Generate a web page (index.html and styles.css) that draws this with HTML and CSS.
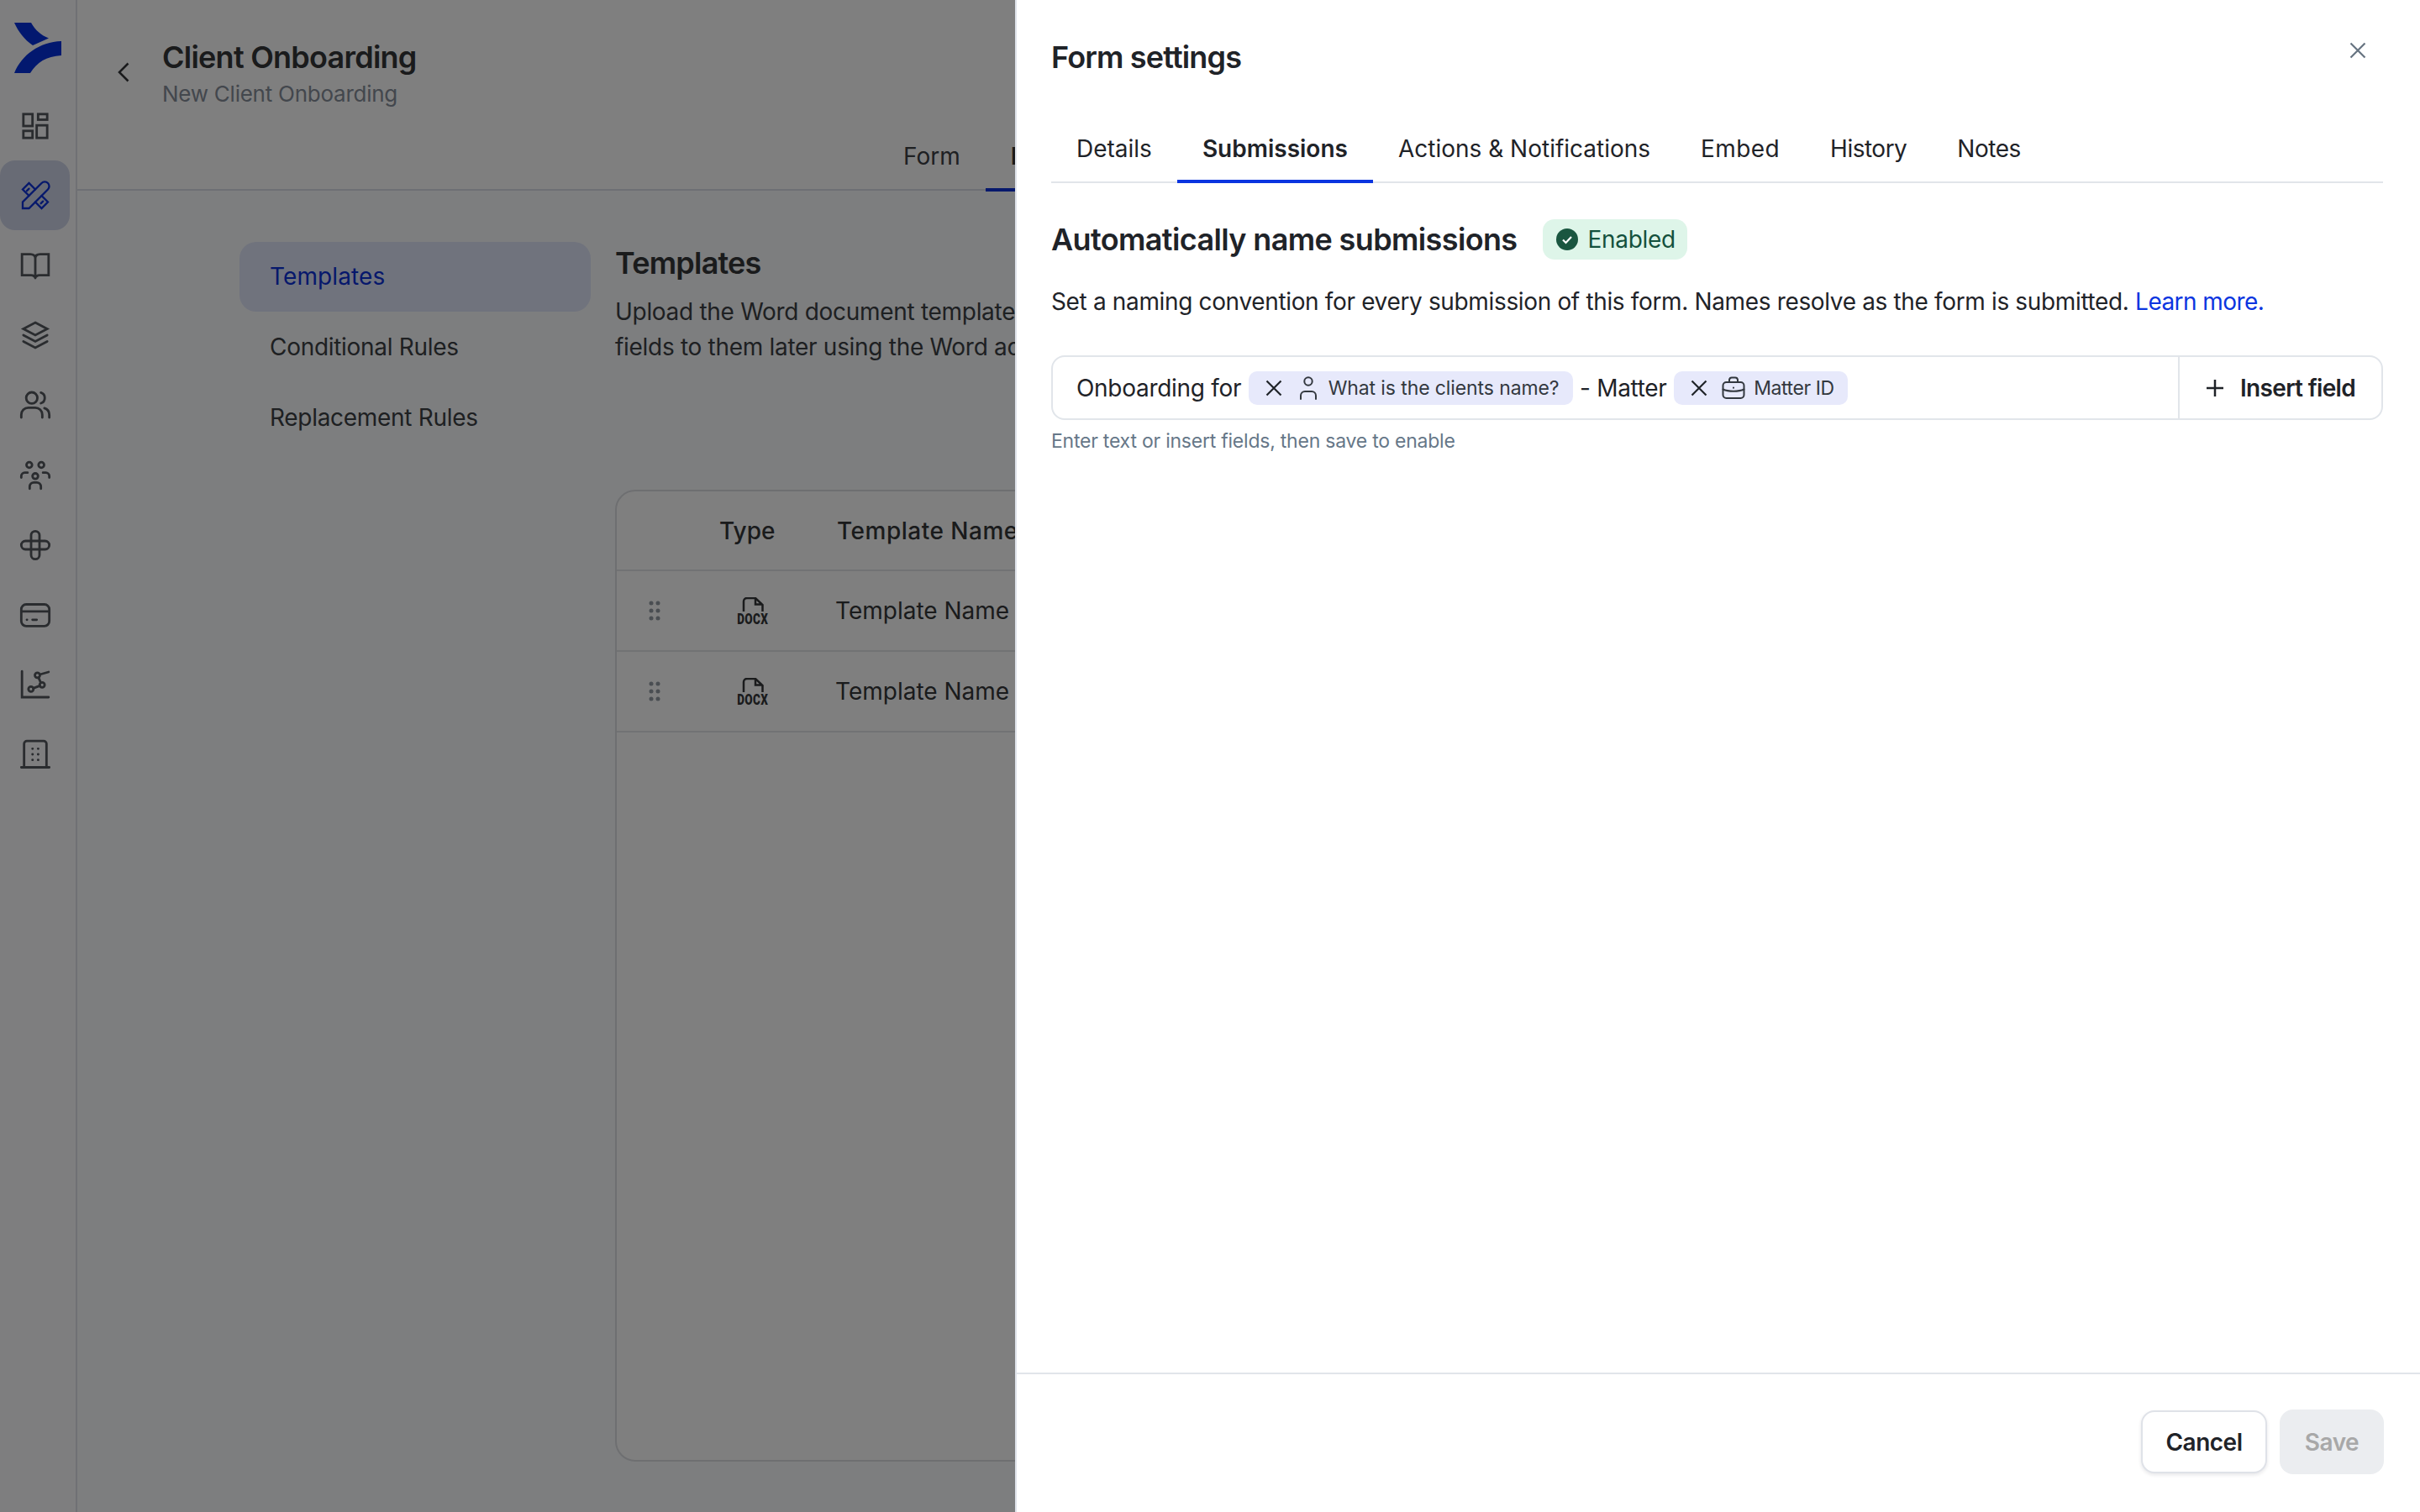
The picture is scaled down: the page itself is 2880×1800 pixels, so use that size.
FILE: index.html

```html
<!DOCTYPE html>
<html lang="en">
<head>
    <meta charset="UTF-8">
    <title>Client Onboarding</title>
    <link rel="stylesheet" href="styles.css">
</head>
<body>

<div class="app">
    <!-- Left icon rail -->
    <aside class="sidebar">
        <svg class="logo" width="56" height="60" viewBox="0 0 56 60">
            <path d="M0 0H20C25 9 32 15 41 18.500L22 27C12 20 5 11 0 0Z"/>
            <path d="M56 22V39C38 40 27 47 19 60H0C9 38 30 23 56 22Z"/>
        </svg>
        <nav class="nav">
            <a class="nav-item">
                <svg viewBox="0 0 24 24"><rect x="3.500" y="3.500" width="6.500" height="8.500"/><rect x="14" y="3.500" width="6.500" height="4"/><rect x="3.500" y="15.500" width="6.500" height="5"/><rect x="13" y="11.500" width="7.500" height="9"/></svg>
            </a>
            <a class="nav-item active">
                <svg viewBox="0 0 24 24"><path d="M3 21V16.500L16.500 3A3.180 3.180 0 0 1 21 7.500L7.500 21Z"/><path d="M7.500 12L3 7.500L7.500 3L12 7.500M12 16.500L16.500 21L21 16.500L16.500 12M6 8.500L7.500 7M16 17.500L17.500 16"/></svg>
            </a>
            <a class="nav-item">
                <svg viewBox="0 0 24 24"><path d="M12 7C12 5 10.500 4 8.500 4H2.500V19H9C10.500 19 12 20 12 21C12 20 13.500 19 15 19H21.500V4H15.500C13.500 4 12 5 12 7ZM12 7V21"/></svg>
            </a>
            <a class="nav-item">
                <svg viewBox="0 0 24 24"><path d="M12 3L20.500 7.500L12 12L3.500 7.500ZM3.500 12L12 16.500L20.500 12M3.500 16.500L12 21L20.500 16.500"/></svg>
            </a>
            <a class="nav-item">
                <svg viewBox="0 0 24 24"><circle cx="9.500" cy="7" r="4"/><path d="M16 3.200A4 4 0 0 1 16 10.800M2 21V19A5 5 0 0 1 7 14H12A5 5 0 0 1 17 19V21M18.500 14.300A5 5 0 0 1 22 19V21"/></svg>
            </a>
            <a class="nav-item">
                <svg viewBox="0 0 24 24"><circle cx="7.700" cy="4.500" r="2"/><circle cx="16.300" cy="4.500" r="2"/><circle cx="12" cy="12.500" r="2"/><path d="M2 13.500V12.500A2.500 2.500 0 0 1 4.500 10H6.500M22 13.500V12.500A2.500 2.500 0 0 0 19.500 10H17.500M8 21.500V20A3 3 0 0 1 11 17H13A3 3 0 0 1 16 20V21.500"/></svg>
            </a>
            <a class="nav-item">
                <svg viewBox="0 0 24 24"><path d="M14 9H5A3 3 0 0 0 5 15H8.500M10 15H19A3 3 0 0 0 19 9H15.500M9 14V5A3 3 0 0 1 15 5V8M15 10V19A3 3 0 0 1 9 19V16"/></svg>
            </a>
            <a class="nav-item">
                <svg viewBox="0 0 24 24"><rect x="2" y="4.500" width="20" height="15.500" rx="3.500"/><path d="M2 9.500H22M6 15.500H6.100M10 15.500H13"/></svg>
            </a>
            <a class="nav-item">
                <svg viewBox="0 0 24 24"><path d="M2.500 2.500V21H21.500M10.500 14.600L15.300 12.800M15.900 10.600L14.300 7M15.200 4.800L21.500 3"/><circle cx="8.900" cy="15.200" r="1.800"/><circle cx="16.900" cy="12.200" r="1.800"/><circle cx="13.500" cy="5.300" r="1.800"/></svg>
            </a>
            <a class="nav-item">
                <svg viewBox="0 0 24 24"><path d="M4 21V4.500A2 2 0 0 1 6 2.500H18A2 2 0 0 1 20 4.500V21M2 21.300H22"/><path d="M10 8H10.100M14 8H14.100M10 12H10.100M14 12H14.100M10 16H10.100M14 16H14.100"/></svg>
            </a>
        </nav>
    </aside>

    <main class="main">
        <header class="page-header">
            <div class="page-title-row">
                <svg class="back-icon" width="14" height="24" viewBox="0 0 14 24"><path d="M12.500 1.500L2 12L12.500 22.500"/></svg>
                <div>
                    <h1 class="page-title">Client Onboarding</h1>
                    <p class="page-subtitle">New Client Onboarding</p>
                </div>
            </div>
            <div class="page-tabs">
                <a class="page-tab">Form</a>
                <a class="page-tab active">Docs</a>
            </div>
        </header>

        <div class="page-body">
            <div class="side-menu">
                <a class="side-item active">Templates</a>
                <a class="side-item">Conditional Rules</a>
                <a class="side-item">Replacement Rules</a>
            </div>
            <section class="content">
                <h2 class="content-title">Templates</h2>
                <p class="content-text">Upload the Word document templates<br>fields to them later using the Word add-in</p>
                <div class="table-card">
                    <div class="table-row table-head">
                        <div></div>
                        <div>Type</div>
                        <div class="head-name">Template Name</div>
                    </div>
                    <div class="table-row">
                        <svg class="drag-icon" width="14" height="24" viewBox="0 0 14 24"><circle cx="3" cy="3" r="2.500"/><circle cx="11" cy="3" r="2.500"/><circle cx="3" cy="12" r="2.500"/><circle cx="11" cy="12" r="2.500"/><circle cx="3" cy="21" r="2.500"/><circle cx="11" cy="21" r="2.500"/></svg>
                        <div class="docx-icon">
                            <svg width="26" height="18" viewBox="0 0 26 18"><path d="M2 17V5A4 4 0 0 1 6 1H16L24.500 9V17M16 1V8.500H24.500"/></svg>
                            <span class="docx-label">DOCX</span>
                        </div>
                        <div>Template Name</div>
                    </div>
                    <div class="table-row">
                        <svg class="drag-icon" width="14" height="24" viewBox="0 0 14 24"><circle cx="3" cy="3" r="2.500"/><circle cx="11" cy="3" r="2.500"/><circle cx="3" cy="12" r="2.500"/><circle cx="11" cy="12" r="2.500"/><circle cx="3" cy="21" r="2.500"/><circle cx="11" cy="21" r="2.500"/></svg>
                        <div class="docx-icon">
                            <svg width="26" height="18" viewBox="0 0 26 18"><path d="M2 17V5A4 4 0 0 1 6 1H16L24.500 9V17M16 1V8.500H24.500"/></svg>
                            <span class="docx-label">DOCX</span>
                        </div>
                        <div>Template Name</div>
                    </div>
                </div>
            </section>
        </div>
    </main>
</div>

<div class="overlay"></div>

<!-- Form settings drawer -->
<div class="drawer">
    <svg class="drawer-close" width="20" height="20" viewBox="0 0 20 20"><path d="M1.500 1.500L18.500 18.500M18.500 1.500L1.500 18.500"/></svg>
    <div class="drawer-top">
        <h2 class="drawer-title">Form settings</h2>
        <div class="tabs">
            <a class="tab">Details</a>
            <a class="tab active">Submissions</a>
            <a class="tab">Actions &amp; Notifications</a>
            <a class="tab tab-loose">Embed</a>
            <a class="tab tab-tight">History</a>
            <a class="tab tab-tight">Notes</a>
        </div>
    </div>

    <div class="drawer-body">
        <div class="section-head">
            <h3 class="section-title">Automatically name submissions</h3>
            <span class="badge">
                <svg width="26" height="26" viewBox="0 0 26 26"><circle cx="13" cy="13" r="13"/><path d="M8 13.500L11.500 17L18 10"/></svg>
                Enabled
            </span>
        </div>
        <p class="section-text">Set a naming convention for every submission of this form. Names resolve as the form is submitted. <a class="link">Learn more.</a></p>

        <div class="name-input">
            <div class="name-parts">
                <span>Onboarding for</span>
                <span class="chip">
                    <svg class="chip-x" width="20" height="20" viewBox="0 0 20 20"><path d="M1.500 1.500L18.500 18.500M18.500 1.500L1.500 18.500"/></svg>
                    <svg class="chip-icon" width="28" height="28" viewBox="0 0 28 28"><circle cx="14" cy="6" r="4.700"/><path d="M5 27V23A5 5 0 0 1 10 18H18A5 5 0 0 1 23 23V27"/></svg>
                    <span class="chip-text">What is the clients name?</span>
                </span>
                <span>- Matter</span>
                <span class="chip">
                    <svg class="chip-x" width="20" height="20" viewBox="0 0 20 20"><path d="M1.500 1.500L18.500 18.500M18.500 1.500L1.500 18.500"/></svg>
                    <svg class="chip-icon" width="28" height="28" viewBox="0 0 28 28"><rect x="1.500" y="7" width="25" height="19" rx="4"/><path d="M9 7V4A3 3 0 0 1 12 1.500H16A3 3 0 0 1 19 4V7M1.500 15.500C8 18.500 20 18.500 26.500 15.500M14 13.500V13.700"/></svg>
                    <span class="chip-text chip-text-short">Matter ID</span>
                </span>
            </div>
            <a class="insert-field">
                <svg width="22" height="22" viewBox="0 0 22 22"><path d="M11 1V21M1 11H21"/></svg>
                Insert field
            </a>
        </div>
        <p class="hint">Enter text or insert fields, then save to enable</p>
    </div>

    <div class="drawer-footer">
        <button class="btn-cancel">Cancel</button>
        <button class="btn-save">Save</button>
    </div>
</div>

</body>
</html>
```

FILE: styles.css

```css
* {
    box-sizing: border-box;
}

body {
    margin: 0;
    font-family: Inter, "Noto Sans", sans-serif;
    font-size: 28px;
    color: #1f2328;
    background-color: #fafcff;
    overflow: hidden;
}

h1, h2, h3, p {
    margin: 0;
}

.app {
    display: flex;
    height: 100vh;
}

/* Icon rail */
.sidebar {
    width: 92px;
    flex-shrink: 0;
    padding-top: 27px;
    border-right: 2px solid #e0e2e8;
    background-color: #fcfdff;
}

.logo {
    display: block;
    margin-left: 17px;
    fill: #0430de;
}

.nav {
    margin-top: 21px;
}

.nav-item {
    display: flex;
    align-items: center;
    justify-content: center;
    width: 83px;
    height: 83.2px;
    border-radius: 18px;
    color: #54585e;
}

.nav-item svg {
    width: 40px;
    height: 40px;
    fill: none;
    stroke: currentColor;
    stroke-width: 1.700;
    stroke-linecap: round;
}

.nav-item.active {
    background-color: #d0d6ea;
    color: #0c30d8;
}

.nav-item.active svg {
    stroke-width: 1.400;
}

/* Page behind the drawer */
.main {
    flex: 1;
    display: flex;
    flex-direction: column;
    min-width: 0;
}

.page-header {
    height: 227px;
    padding-top: 45px;
    border-bottom: 2px solid #dadee8;
    background-color: #fff;
}

.page-title-row {
    display: flex;
    align-items: center;
    padding-left: 48px;
}

.back-icon {
    margin: 0 39px 6px 0;
    fill: none;
    stroke: #343639;
    stroke-width: 2.500;
}

.page-title {
    font-size: 36px;
    line-height: 46px;
    font-weight: 600;
    letter-spacing: -0.760px;
    color: #343639;
}

.page-subtitle {
    font-size: 26px;
    line-height: 42px;
    letter-spacing: -0.250px;
    color: #868e9a;
}

.page-tabs {
    display: flex;
    margin-top: 15px;
    padding-left: 953px;
}

.page-tab {
    height: 80px;
    padding: 0 30px;
    line-height: 76px;
    color: #3c4044;
    border-bottom: 4px solid transparent;
}

.page-tab.active {
    font-weight: 600;
    color: #343639;
    border-bottom-color: #0c30d8;
}

.page-body {
    flex: 1;
    display: flex;
    gap: 29px;
    padding: 61px 100px 60px 193px;
    min-height: 0;
}

.side-menu {
    width: 418px;
    flex-shrink: 0;
    display: flex;
    flex-direction: column;
    gap: 1px;
}

.side-item {
    height: 83px;
    padding-left: 36px;
    border-radius: 20px;
    line-height: 83px;
    letter-spacing: -0.300px;
    color: #3c4044;
}

.side-item.active {
    background-color: #e0e6fa;
    letter-spacing: 0.100px;
    color: #0c30d8;
}

.content {
    flex: 1;
    display: flex;
    flex-direction: column;
    min-width: 0;
}

.content-title {
    font-size: 36px;
    line-height: 50px;
    font-weight: 600;
    letter-spacing: -0.780px;
    color: #343639;
}

.content-text {
    margin-top: 12px;
    line-height: 42px;
    letter-spacing: -0.300px;
    white-space: nowrap;
    color: #3c4044;
}

.table-card {
    flex: 1;
    margin-top: 149px;
    border: 2px solid #dcdee2;
    border-radius: 24px;
    background-color: #fff;
    color: #343639;
}

.table-row {
    display: grid;
    grid-template-columns: 122px 138px 1fr;
    align-items: center;
    height: 96px;
    border-bottom: 2px solid #e2e4e8;
}

.table-head {
    height: 95px;
    font-weight: 500;
}

.head-name {
    padding-left: 2px;
    letter-spacing: 0.500px;
}

.drag-icon {
    margin-left: 38px;
    fill: #949ca4;
}

.docx-icon {
    display: flex;
    flex-direction: column;
    align-items: center;
    width: 37px;
    margin-left: 21px;
}

.docx-icon svg {
    display: block;
    fill: none;
    stroke: #343639;
    stroke-width: 2.500;
}

.docx-label {
    font-family: Roboto, sans-serif;
    font-size: 18px;
    line-height: 15px;
    font-weight: 900;
    letter-spacing: 0.500px;
    transform: scaleX(0.750);
}

/* Dim layer */
.overlay {
    position: fixed;
    inset: 0;
    background-color: rgba(0, 0, 0, 0.5);
}

/* Drawer */
.drawer {
    position: fixed;
    top: 0;
    right: 0;
    bottom: 0;
    width: 1672px;
    display: flex;
    flex-direction: column;
    border-left: 2px solid #dfe3ea;
    background-color: #fff;
}

.drawer-close {
    position: absolute;
    top: 50px;
    right: 64px;
    fill: none;
    stroke: #667380;
    stroke-width: 2.200;
}

.drawer-top {
    padding: 46px 44px 0 41px;
}

.drawer-title {
    font-size: 36px;
    line-height: 44px;
    font-weight: 600;
    letter-spacing: -0.850px;
}

.tabs {
    display: flex;
    margin-top: 50px;
    border-bottom: 2px solid #e1e5ea;
}

.tab {
    height: 78px;
    margin-bottom: -2px;
    padding: 0 30px;
    line-height: 74px;
    border-bottom: 4px solid transparent;
}

.tab.active {
    font-weight: 600;
    border-bottom-color: #0b35e0;
}

.tab-loose {
    letter-spacing: 0.400px;
}

.tab-tight {
    letter-spacing: -0.500px;
}

.drawer-body {
    flex: 1;
    padding: 43px 44px 0 41px;
}

.section-head {
    display: flex;
    align-items: center;
    gap: 30px;
}

.section-title {
    font-size: 36px;
    line-height: 48px;
    font-weight: 600;
    letter-spacing: -0.630px;
}

.badge {
    display: flex;
    align-items: center;
    gap: 12px;
    height: 48px;
    padding: 0 14px 0 16px;
    border-radius: 14px;
    background-color: #def5e9;
    letter-spacing: -0.300px;
    color: #14513d;
}

.badge svg {
    fill: #1a5640;
}

.badge svg path {
    fill: none;
    stroke: #fff;
    stroke-width: 2.200;
}

.section-text {
    margin-top: 29px;
    line-height: 42px;
    letter-spacing: -0.350px;
}

.link {
    letter-spacing: -0.550px;
    color: #0b35e0;
}

.name-input {
    display: flex;
    height: 77px;
    margin-top: 43px;
    border: 2px solid #e1e5ea;
    border-radius: 16px;
}

.name-parts {
    flex: 1;
    display: flex;
    align-items: center;
    gap: 8.500px;
    padding-left: 28px;
    letter-spacing: -0.300px;
}

.chip {
    display: flex;
    align-items: center;
    height: 40px;
    padding: 0 16px 0 20px;
    border-radius: 10px;
    background-color: #e7e9fb;
}

.chip-x {
    fill: none;
    stroke: #1f2328;
    stroke-width: 2.200;
}

.chip-icon {
    margin: 0 10px 0 17px;
    fill: none;
    stroke: #33383f;
    stroke-width: 2;
    stroke-linecap: round;
}

.chip-text {
    font-size: 23px;
    letter-spacing: -0.100px;
    color: #33383f;
}

.chip-text-short {
    letter-spacing: -0.400px;
}

.insert-field {
    display: flex;
    align-items: center;
    gap: 19px;
    width: 242px;
    padding-left: 31px;
    border-left: 2px solid #e1e5ea;
    font-weight: 600;
    letter-spacing: -0.670px;
}

.insert-field svg {
    fill: none;
    stroke: #1f2328;
    stroke-width: 2.500;
}

.hint {
    margin-top: 7px;
    font-size: 23px;
    line-height: 36px;
    letter-spacing: -0.230px;
    color: #667788;
}

.drawer-footer {
    display: flex;
    justify-content: flex-end;
    align-items: center;
    gap: 15px;
    height: 166px;
    padding: 0 43px 3px 0;
    border-top: 2px solid #e1e5ea;
}

.btn-cancel,
.btn-save {
    font-family: inherit;
    font-size: 28px;
    font-weight: 600;
    letter-spacing: -0.500px;
    border-radius: 16px;
}

.btn-cancel {
    width: 150px;
    height: 75px;
    border: 2px solid #dfe2e8;
    background-color: #fff;
    color: #1f2328;
    box-shadow: 0 2px 4px rgba(16, 24, 40, 0.1);
}

.btn-save {
    width: 124px;
    height: 77px;
    border: none;
    background-color: #ebedf0;
    color: #a8a8a8;
}
```
